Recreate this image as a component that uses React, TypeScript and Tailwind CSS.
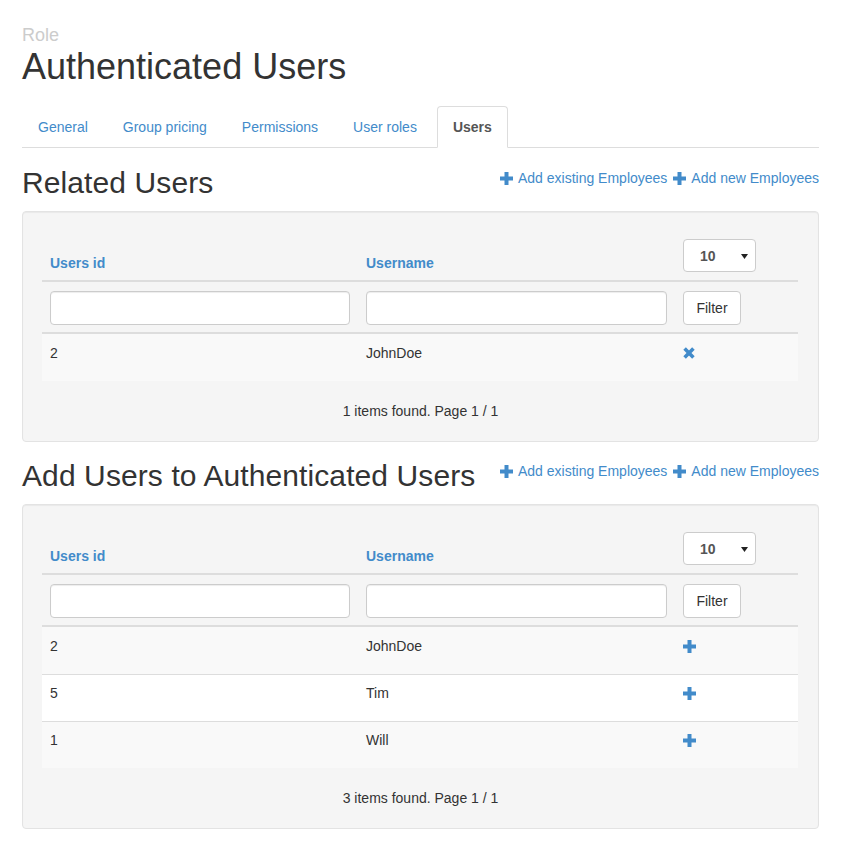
import React from "react";

function PlusIcon() {
  return (
    <svg width="13" height="13" viewBox="0 0 13 13" className="shrink-0">
      <path d="M4.5 0h4v4.5H13v4H8.5V13h-4V8.5H0v-4h4.5z" fill="#428bca" />
    </svg>
  );
}

function RemoveIcon() {
  return (
    <svg width="12" height="12" viewBox="0 0 12 12" className="shrink-0">
      <path d="M1.6 1.6L10.4 10.4M10.4 1.6L1.6 10.4" stroke="#428bca" strokeWidth="3.6" />
    </svg>
  );
}

function HeaderLinks() {
  return (
    <div className="mt-[2px] flex items-center gap-[6px] text-[14px] leading-[20px] text-[#428bca]">
      <a className="flex items-center gap-[5px]">
        <PlusIcon />
        <span>Add existing Employees</span>
      </a>
      <a className="flex items-center gap-[5px]">
        <PlusIcon />
        <span>Add new Employees</span>
      </a>
    </div>
  );
}

type Row = { id: string; name: string };

function DataTable({ rows, action }: { rows: Row[]; action: "remove" | "add" }) {
  const grid = "grid grid-cols-[316px_317px_123px]";
  return (
    <div className="w-[756px]">
      <div className={`${grid} border-b-2 border-[#dddddd] items-end`}>
        <div className="px-[8px] pt-[8px] pb-[7px] font-bold text-[#428bca]">Users id</div>
        <div className="px-[8px] pt-[8px] pb-[7px] font-bold text-[#428bca]">Username</div>
        <div className="p-[8px]">
          <div className="relative h-[33px] w-[73px] rounded-[4px] border border-[#cccccc] bg-white flex items-center pl-[16px] font-bold text-[#555555]">
            10
            <svg width="7" height="5" viewBox="0 0 7 5" className="absolute right-[7px] top-[14px]">
              <path d="M0 0h7L3.5 5z" fill="#222" />
            </svg>
          </div>
        </div>
      </div>
      <div className={`${grid} border-b-2 border-[#dddddd]`}>
        <div className="px-[8px] pt-[9px] pb-[7px]">
          <div className="h-[34px] w-full rounded-[4px] border border-[#cccccc] bg-white shadow-[inset_0_1px_1px_rgba(0,0,0,0.075)]" />
        </div>
        <div className="px-[8px] pt-[9px] pb-[7px]">
          <div className="h-[34px] w-full rounded-[4px] border border-[#cccccc] bg-white shadow-[inset_0_1px_1px_rgba(0,0,0,0.075)]" />
        </div>
        <div className="px-[8px] pt-[9px] pb-[7px]">
          <div className="h-[34px] w-[58px] rounded-[4px] border border-[#cccccc] bg-white flex items-center justify-center text-[#333333]">
            Filter
          </div>
        </div>
      </div>
      {rows.map((r, i) => (
        <div
          key={i}
          className={`${grid} h-[47px] border-t ${i === 0 ? "border-transparent" : "border-[#dddddd]"} ${
            i % 2 === 0 ? "bg-[#f9f9f9]" : "bg-white"
          }`}
        >
          <div className="px-[8px] pt-[8px]">{r.id}</div>
          <div className="px-[8px] pt-[8px]">{r.name}</div>
          <div className="px-[8px] pt-[8px]">
            <div className="h-[20px] flex items-center">
              {action === "remove" ? <RemoveIcon /> : <PlusIcon />}
            </div>
          </div>
        </div>
      ))}
    </div>
  );
}

function Section({ title, rows, action, mt }: { title: string; rows: Row[]; action: "remove" | "add"; mt: string }) {
  return (
    <section className={mt}>
      <div className="flex items-start justify-between">
        <h2 className="text-[30px] leading-[33px] font-normal text-[#333333] tracking-[0.1px]">{title}</h2>
        <HeaderLinks />
      </div>
      <div className="mt-[12px] rounded-[4px] border border-[#e3e3e3] bg-[#f5f5f5] px-[19px] pt-[19px] pb-[20px] shadow-[inset_0_1px_1px_rgba(0,0,0,0.05)]">
        <DataTable rows={rows} action={action} />
        <div className="mt-[20px] text-center leading-[20px]">
          {rows.length} items found. Page 1 / 1
        </div>
      </div>
    </section>
  );
}

export default function App() {
  const tabs = ["General", "Group pricing", "Permissions", "User roles"];
  return (
    <div className="min-h-[865px] bg-white font-['Liberation_Sans',Arial,sans-serif] text-[14px] leading-[20px] text-[#333333]">
      <div className="ml-[22px] w-[797px] pt-[25px]">
        <div className="text-[18px] leading-[20px] text-[#cccccc]">Role</div>
        <h1 className="mt-[2px] text-[36px] leading-[40px] font-normal text-[#333333]">Authenticated Users</h1>

        <div className="mt-[19px] flex border-b border-[#dddddd]">
          {tabs.map((t) => (
            <div
              key={t}
              className="mr-[2px] mb-[-1px] pl-[15px] pr-[16px] py-[10px] border border-transparent text-[#428bca] leading-[20px]"
            >
              {t}
            </div>
          ))}
          <div className="ml-px mr-[2px] mb-[-1px] px-[15px] py-[10px] rounded-t-[4px] border border-[#dddddd] border-b-white bg-white font-bold text-[#555555] leading-[20px]">
            Users
          </div>
        </div>

        <Section
          title="Related Users"
          rows={[{ id: "2", name: "JohnDoe" }]}
          action="remove"
          mt="mt-[18px]"
        />
        <Section
          title="Add Users to Authenticated Users"
          rows={[
            { id: "2", name: "JohnDoe" },
            { id: "5", name: "Tim" },
            { id: "1", name: "Will" },
          ]}
          action="add"
          mt="mt-[17px]"
        />
      </div>
    </div>
  );
}
